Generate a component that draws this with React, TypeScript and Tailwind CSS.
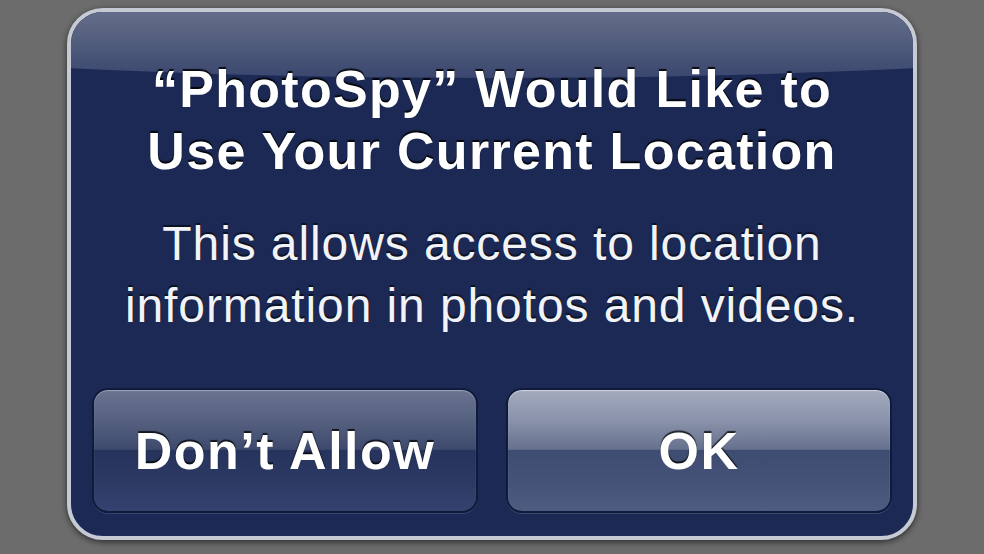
const font = { fontFamily: '"Liberation Sans", Arial, Helvetica, sans-serif' };

function AlertButton({ label, primary }: { label: string; primary?: boolean }) {
  return (
    <button
      className={
        primary
          ? "w-[386px] h-[125px] rounded-[16px] border-2 border-[#101b3c] text-white font-bold text-[52px] tracking-[1.5px] [text-shadow:0_-2px_1px_rgba(0,0,0,0.75)] bg-[linear-gradient(to_bottom,#a3aabe_0%,#8a93ab_25%,#66718e_49%,#3f4c72_50%,#455278_75%,#4f5c82_100%)] shadow-[inset_0_1px_1px_rgba(255,255,255,0.5),0_1px_0_rgba(120,135,170,0.35)]"
          : "w-[386px] h-[125px] rounded-[16px] border-2 border-[#101b3c] text-white font-bold text-[52px] tracking-[1.5px] [text-shadow:0_-2px_1px_rgba(0,0,0,0.75)] bg-[linear-gradient(to_bottom,#6a7491_0%,#566180_25%,#3e4a6d_49%,#26335c_50%,#2c3962_75%,#354270_100%)] shadow-[inset_0_1px_1px_rgba(255,255,255,0.35),0_1px_0_rgba(120,135,170,0.3)]"
      }
    >
      {label}
    </button>
  );
}

export default function App() {
  return (
    <div
      className="w-[984px] h-[554px] bg-[#6c6c6c] flex justify-center pt-[8px] overflow-hidden"
      style={font}
    >
      <div className="w-[850px] h-[532px] rounded-[36px] border-[4px] border-[#c6cad3] bg-[#1b2954] shadow-[0_2px_6px_rgba(0,0,0,0.6)] relative overflow-hidden flex flex-col">
        {/* gloss arc */}
        <div className="absolute left-[-479px] top-[-102px] w-[1800px] h-[168px] rounded-[50%] bg-[linear-gradient(to_bottom,#6a7390_0%,#6a7390_55%,#56617f_75%,#3a466e_100%)]" />
        <div className="relative flex flex-col items-center text-white text-center">
          <h1 className="mt-[46px] font-bold text-[52px] leading-[62px] tracking-[1.3px] [text-shadow:0_-2px_1px_rgba(0,0,0,0.85)]">
            “PhotoSpy” Would Like to
            <br />
            Use Your Current Location
          </h1>
          <p className="mt-[31px] text-[48px] leading-[62px] tracking-[0.9px] text-[#f2f3f6] [text-shadow:0_-2px_1px_rgba(0,0,0,0.6)]">
            This allows access to location
            <br />
            information in photos and videos.
          </p>
        </div>
        <div className="relative mt-auto mb-[23px] px-[21px] flex justify-between">
          <AlertButton label="Don’t Allow" />
          <AlertButton label="OK" primary />
        </div>
      </div>
    </div>
  );
}
